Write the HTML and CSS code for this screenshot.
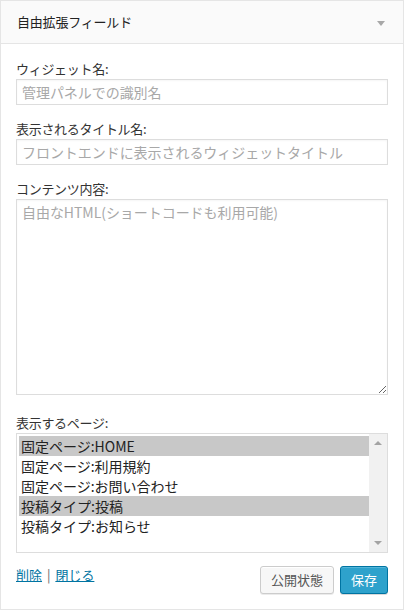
FILE: index.html
```html
<!DOCTYPE html>
<html lang="ja">
<head>
<meta charset="utf-8">
<link rel="stylesheet" href="styles.css">
</head>
<body>
<div class="widget">
  <div class="widget-top">
    <h3 class="widget-title">自由拡張フィールド</h3>
    <span class="toggle"></span>
  </div>
  <div class="widget-inside">
    <div class="field">
      <label class="label">ウィジェット名:</label>
      <input class="text" type="text" placeholder="管理パネルでの識別名">
    </div>
    <div class="field">
      <label class="label">表示されるタイトル名:</label>
      <input class="text" type="text" placeholder="フロントエンドに表示されるウィジェットタイトル">
    </div>
    <div class="field">
      <label class="label">コンテンツ内容:</label>
      <textarea class="area" placeholder="自由なHTML(ショートコードも利用可能)"></textarea>
    </div>
    <div class="field field-pages">
      <label class="label">表示するページ:</label>
      <div class="listbox" role="listbox">
        <div class="options">
          <div class="opt sel">固定ページ:HOME</div>
          <div class="opt">固定ページ:利用規約</div>
          <div class="opt">固定ページ:お問い合わせ</div>
          <div class="opt sel">投稿タイプ:投稿</div>
          <div class="opt">投稿タイプ:お知らせ</div>
        </div>
        <div class="scrollbar">
          <span class="arr up"></span>
          <span class="arr down"></span>
        </div>
      </div>
    </div>
    <div class="footer">
      <div class="links"><a href="#">削除</a> <span class="sep">|</span> <a href="#">閉じる</a></div>
      <div class="buttons">
        <button class="btn">公開状態</button>
        <button class="btn primary">保存</button>
      </div>
    </div>
  </div>
</div>
</body>
</html>
```
FILE: styles.css
```css
html, body {
  margin: 0;
  padding: 0;
  background: #fff;
}
body {
  font-family: "Noto Sans CJK JP", "Noto Sans", sans-serif;
  color: #333;
  font-size: 13px;
}
.widget {
  width: 404px;
  height: 610px;
  box-sizing: border-box;
  border: 1px solid #e5e5e5;
  background: #fff;
}
.widget-top {
  height: 42px;
  background: #fafafa;
  border-bottom: 1px solid #e5e5e5;
  display: flex;
  align-items: center;
  justify-content: space-between;
  padding: 0 18px 0 16px;
}
.widget-title {
  margin: 0;
  font-size: 13px;
  font-weight: normal;
  color: #222;
  line-height: 18px;
  letter-spacing: -0.2px;
}
.toggle {
  width: 0;
  height: 0;
  border-left: 4px solid transparent;
  border-right: 4px solid transparent;
  border-top: 5px solid #a8a8a8;
  margin-top: 2px;
}
.widget-inside {
  padding: 16px 15px 0 15px;
}
.field {
  display: flex;
  flex-direction: column;
  margin-bottom: 15px;
}
.label {
  line-height: 18px;
  height: 18px;
  margin-bottom: 1px;
  color: #333;
  letter-spacing: -0.3px;
}
.text {
  box-sizing: border-box;
  width: 372px;
  height: 26px;
  margin: 0;
  border: 1px solid #ddd;
  padding: 0 5px;
  font-family: inherit;
  font-size: 14px;
  color: #333;
  outline: none;
  box-shadow: inset 0 1px 2px rgba(0,0,0,0.04);
}
.text::placeholder,
.area::placeholder {
  color: #a8a8a8;
  letter-spacing: -0.05px;
}
.area {
  box-sizing: border-box;
  width: 372px;
  height: 196px;
  margin: 0 0 4px 0;
  border: 1px solid #ddd;
  padding: 2px 5px;
  font-family: inherit;
  font-size: 14px;
  line-height: 20px;
  color: #333;
  outline: none;
  resize: vertical;
  box-shadow: inset 0 1px 2px rgba(0,0,0,0.04);
}
.field-pages {
  margin-bottom: 13px;
}
.listbox {
  box-sizing: border-box;
  width: 372px;
  height: 120px;
  border: 1px solid #ddd;
  display: flex;
  background: #fff;
}
.options {
  flex: 1;
  padding: 2px 0 0 2px;
}
.opt {
  height: 20px;
  line-height: 20px;
  font-size: 14px;
  color: #222;
  padding-left: 2px;
  letter-spacing: 0;
}
.opt.sel {
  background: #c8c8c8;
}
.scrollbar {
  width: 18px;
  background: #f1f1f1;
  display: flex;
  flex-direction: column;
  justify-content: space-between;
  align-items: center;
  padding: 7px 0 7px 0;
}
.arr {
  width: 0;
  height: 0;
  border-left: 4px solid transparent;
  border-right: 4px solid transparent;
}
.arr.up {
  border-bottom: 4px solid #a3a3a3;
}
.arr.down {
  border-top: 4px solid #a3a3a3;
}
.footer {
  display: flex;
  justify-content: space-between;
  align-items: flex-start;
}
.links {
  line-height: 18px;
  font-size: 13px;
}
.links a {
  color: #0074a2;
  text-decoration: underline;
}
.sep {
  color: #666;
  margin: 0 2px;
}
.buttons {
  display: flex;
  gap: 6px;
}
.btn {
  box-sizing: border-box;
  height: 28px;
  padding: 0 10px;
  font-family: inherit;
  font-size: 13px;
  line-height: 26px;
  border: 1px solid #ccc;
  border-radius: 3px;
  background: #f7f7f7;
  color: #555;
  box-shadow: inset 0 1px 0 #fff, 0 1px 0 rgba(0,0,0,0.08);
  cursor: pointer;
}
.btn.primary {
  background: #2ea2cc;
  border-color: #0074a2;
  color: #fff;
  box-shadow: inset 0 1px 0 rgba(120,200,230,0.5), 0 1px 0 rgba(0,0,0,0.15);
}
```
